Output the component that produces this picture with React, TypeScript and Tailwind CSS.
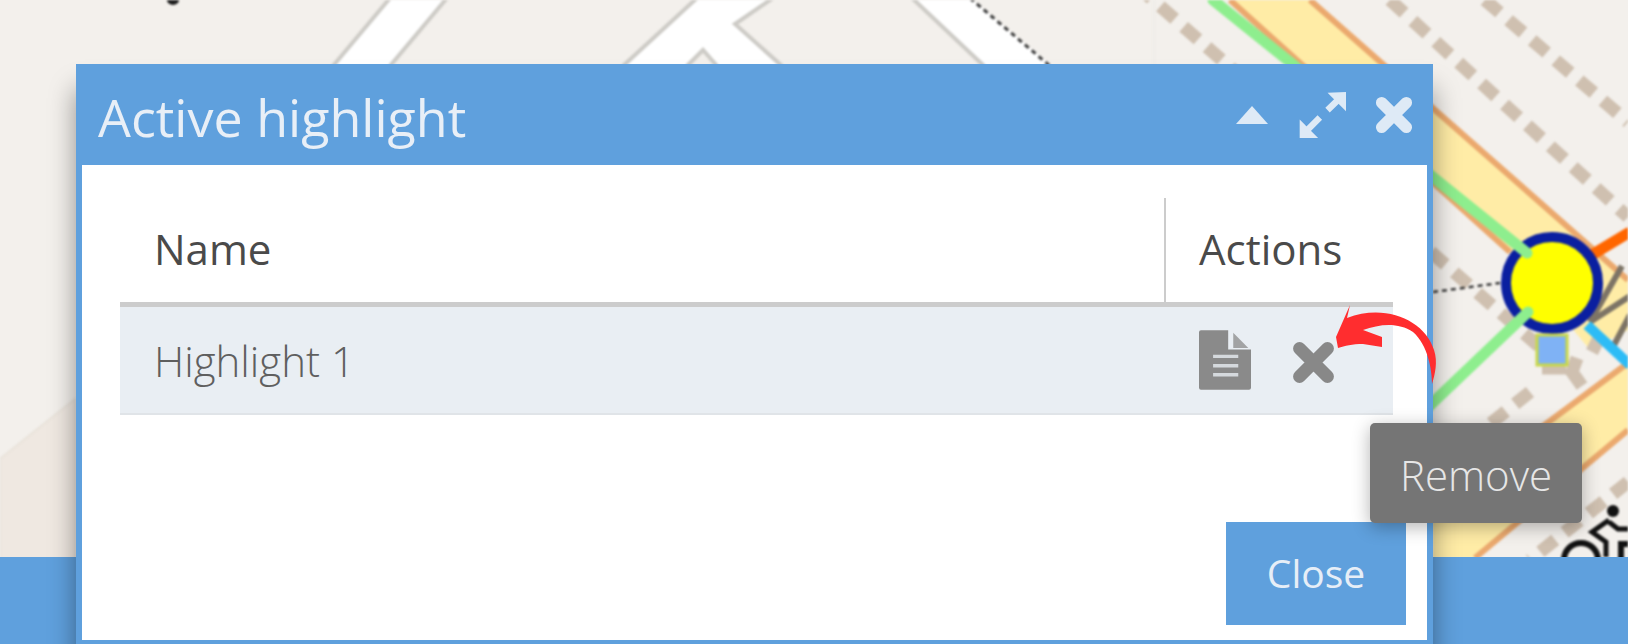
import { CSSProperties } from 'react'

const font: CSSProperties = { fontFamily: '"Open Sans", "Liberation Sans", sans-serif' }

function MapBackground() {
  return (
    <svg className="absolute inset-0 blur-[0.8px]" width="1628" height="644" viewBox="0 0 1628 644" fill="none">
      <ellipse cx="173" cy="0" rx="6" ry="5" fill="#1c1c1c" />
      <path d="M0 459L75 399V560H0Z" fill="#efe8e1" stroke="#e8e2da" strokeWidth="2" />
      <path d="M1154 0V70" stroke="#ebe9e5" strokeWidth="1" />

      {/* white roads */}
      <path d="M390 -2L333 66H390L447 -2Z" fill="#fff" />
      <path d="M390 -2L333 66M447 -2L390 66" stroke="#cdcbc6" strokeWidth="4" />
      <path d="M697 -2L623 66H687L703 50L717 66H782L735 24L773 -2Z" fill="#fff" />
      <path d="M697 -2L623 66M687 66L703 50L717 66M782 66L735 24L773 -2" stroke="#cdcbc6" strokeWidth="4" />
      <path d="M912 -2L984 66H1052L970 -2Z" fill="#fff" />
      <path d="M912 -2L984 66" stroke="#cdcbc6" strokeWidth="4" />
      <path d="M970 -2L1050 66" stroke="#3c3c3c" strokeWidth="3" strokeDasharray="5 4" />

      {/* main yellow band */}
      <path d="M1230 0H1310L1628 280V330L1590 350L1507 250Z" fill="#ffeca6" />
      <path d="M1230 0L1510 252" stroke="#eba96e" strokeWidth="6" />
      <path d="M1310 0L1628 280" stroke="#eba96e" strokeWidth="6" />

      {/* lower yellow band */}
      <path d="M1433 508L1628 363V430L1475 558H1433Z" fill="#ffeca6" />
      <path d="M1433 508L1628 363M1475 558L1628 430" stroke="#eba96e" strokeWidth="6" />

      {/* footpaths */}
      <g stroke="#cfc0b0" strokeWidth="13">
        <path d="M1390 0L1628 217" strokeDasharray="19 12" />
        <path d="M1485 0L1628 122" strokeDasharray="19 12" />
        <path d="M1137 -14L1240 76" strokeDasharray="19 12" />
        <path d="M1431 252L1550 356" strokeDasharray="19 12" />
        <path d="M1542 368H1566" />
        <path d="M1530 392L1480 432" strokeDasharray="19 12" />
        <path d="M1577 358L1572 372L1582 386" />
        <path d="M1592 352L1598 340" />
        <path d="M1628 482L1530 560" strokeDasharray="19 12" />
      </g>

      <path d="M1433 292L1500 283" stroke="#3c3c3c" strokeWidth="2.5" strokeDasharray="5 4" />

      {/* brown rail lines */}
      <g stroke="#7d7466" strokeWidth="6">
        <path d="M1590 322L1622 266" />
        <path d="M1590 322L1630 296" />
        <path d="M1614 345L1630 315" />
      </g>

      {/* network lines and node */}
      <path d="M1590 256L1630 232" stroke="#ff6600" strokeWidth="11" />
      <path d="M1587 325L1630 365" stroke="#2dbcf6" strokeWidth="10" />
      <circle cx="1552" cy="283" r="46" fill="#ffff00" stroke="#0a1fa0" strokeWidth="10" />
      <path d="M1213 0L1527 253" stroke="#8eee8e" strokeWidth="11" strokeLinecap="round" />
      <path d="M1528 312L1425 410" stroke="#8eee8e" strokeWidth="11" strokeLinecap="round" />
      <rect x="1537" y="335" width="30" height="30" fill="#7fb2f5" stroke="#c8d84a" strokeWidth="3" />

      {/* cycle shop marker */}
      <circle cx="1613" cy="511" r="6" fill="#111" />
      <path d="M1609 520L1592 532L1606 542V557M1609 522L1618 529H1628" stroke="#111" strokeWidth="5" />
      <circle cx="1581" cy="560" r="17" stroke="#111" strokeWidth="6" />
      <path d="M1621 560V544H1630" stroke="#111" strokeWidth="6" />
    </svg>
  )
}

function CollapseIcon() {
  return (
    <svg width="32" height="18" viewBox="0 0 32 18" fill="#deeaf6">
      <path d="M16 0L32 18H0Z" />
    </svg>
  )
}

function ExpandIcon() {
  return (
    <svg width="47" height="46" viewBox="0 0 140 137" fill="#deeaf6">
      <path d="M85 2L140 0V57Z" />
      <path d="M2 137V82L57 137Z" />
      <path d="M118 22L85 54M22 116L62 76" stroke="#deeaf6" strokeWidth="19" />
    </svg>
  )
}

function CrossIcon({ size, color }: { size: number; color: string }) {
  return (
    <svg width={size} height={size} viewBox="0 0 40 40" fill="none">
      <path d="M7 7L33 33M33 7L7 33" stroke={color} strokeWidth="12" strokeLinecap="round" />
    </svg>
  )
}

function FileIcon() {
  return (
    <svg width="52" height="60" viewBox="0 0 155 178">
      <path d="M0 6Q0 0 6 0H87V58H155V172Q155 178 149 178H6Q0 178 0 172Z" fill="#8a8a8a" />
      <path d="M102 8L147 53H102Z" fill="#8a8a8a" opacity="0.75" />
      <path d="M42 73H117V83H42ZM42 101H117V111H42ZM42 128H117V138H42Z" fill="#d5d9dd" />
    </svg>
  )
}

function RedArrow() {
  return (
    <svg className="absolute left-[1330px] top-[300px]" width="110" height="90" viewBox="1330 300 110 90">
      <path
        d="M1350 305L1347 318C1385 303 1425 320 1434 350C1438 362 1435 374 1432 384C1432 370 1428 345 1413 332C1398 322 1380 324 1363 330L1382 337L1382 347L1363 344C1352 344 1345 346 1338 348L1336 337Z"
        fill="#ff2d2f"
      />
    </svg>
  )
}

export default function App() {
  return (
    <div className="relative h-[644px] w-[1628px] overflow-hidden bg-[#f3f0ec]" style={font}>
      <MapBackground />
      <div className="absolute inset-x-0 bottom-0 h-[87px] bg-[#5fa0dd]" />

      <div className="absolute left-[76px] top-[64px] flex h-[580px] w-[1357px] flex-col bg-[#5fa0dd] shadow-[0_25px_25px_rgba(0,0,0,0.4)]">
        <div className="flex h-[101px] shrink-0 items-center justify-between pl-[22px] pr-[20px]">
          <h1 className="mt-[5px] text-[52px] font-normal leading-none text-[#e8eff7]">Active highlight</h1>
          <div className="flex items-center">
            <CollapseIcon />
            <span className="ml-[31px]">
              <ExpandIcon />
            </span>
            <span className="ml-[29px]">
              <CrossIcon size={38} color="#deeaf6" />
            </span>
          </div>
        </div>

        <div className="mx-[6px] mb-[4px] flex flex-1 flex-col bg-white pl-[38px] pr-[34px] pt-[33px]">
          <div className="flex h-[104px] items-center text-[42px] text-[#4a4a4a]">
            <div className="flex-1 pb-[3px] pl-[34px]">Name</div>
            <div className="flex h-full w-[229px] items-center border-l-2 border-[#ccc] pb-[3px] pl-[33px]">Actions</div>
          </div>
          <div className="flex h-[113px] items-center border-t-[5px] border-b-2 border-t-[#ccc] border-b-[#e0e4e8] bg-[#e9eef3]">
            <div className="flex-1 pl-[34px] text-[42px] font-light text-[#5f5f5f]">Highlight 1</div>
            <div className="flex w-[194px] items-center">
              <FileIcon />
              <span className="ml-[41px] mt-[5px]">
                <CrossIcon size={43} color="#888" />
              </span>
            </div>
          </div>
          <div className="mr-[-13px] mt-auto mb-[15px] flex justify-end">
            <button className="h-[103px] w-[180px] bg-[#5fa0dd] text-[39px] text-[#e6eef7]">Close</button>
          </div>
        </div>
      </div>

      <RedArrow />
      <div className="absolute left-[1370px] top-[423px] flex h-[100px] w-[212px] items-center justify-center rounded-[5px] bg-[#757575] pt-[2px] text-[42px] font-light text-[#e6e6e6] shadow-[0_4px_18px_rgba(0,0,0,0.3)]">
        Remove
      </div>
    </div>
  )
}
